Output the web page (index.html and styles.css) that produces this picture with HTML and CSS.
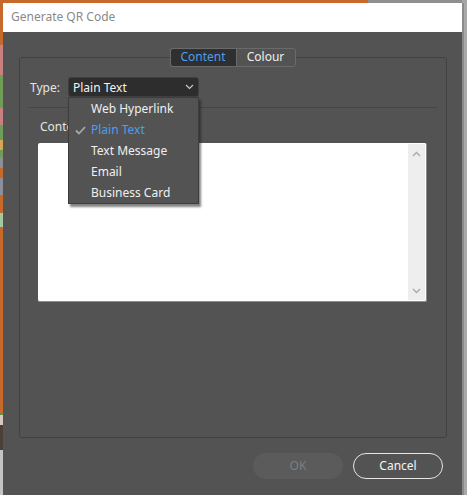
FILE: index.html
```html
<!DOCTYPE html>
<html>
<head>
<meta charset="utf-8">
<link rel="stylesheet" href="styles.css">
</head>
<body>
<div class="topstrip"></div>
<div class="screen">
  <div class="leftstrip"></div>
  <div class="dialog">
    <div class="titlebar">Generate QR Code</div>
    <div class="body">
      <div class="group">
        <div class="tabs">
          <div class="tab active">Content</div>
          <div class="tab">Colour</div>
        </div>
        <div class="typerow">
          <span class="label">Type:</span>
          <div class="selectwrap">
            <div class="select">
              <span>Plain Text</span>
              <svg class="chev" width="9" height="6" viewBox="0 0 9 6"><path d="M1 1 L4.5 4.5 L8 1" fill="none" stroke="#c8c8c8" stroke-width="1.2"/></svg>
            </div>
            <ul class="menu">
              <li>Web Hyperlink</li>
              <li class="checked"><svg class="check" width="11" height="9" viewBox="0 0 11 9"><path d="M1 4.5 L4 7.5 L10 1" fill="none" stroke="#a8a8a8" stroke-width="1.8"/></svg>Plain Text</li>
              <li>Text Message</li>
              <li>Email</li>
              <li>Business Card</li>
            </ul>
          </div>
        </div>
        <div class="sep"></div>
        <div class="contentlabel">Content:</div>
        <div class="textarea">
          <div class="scrollbar">
            <svg width="9" height="6" viewBox="0 0 9 6"><path d="M1 5 L4.5 1.5 L8 5" fill="none" stroke="#a9a9a9" stroke-width="1.4"/></svg>
            <svg width="9" height="6" viewBox="0 0 9 6"><path d="M1 1 L4.5 4.5 L8 1" fill="none" stroke="#a9a9a9" stroke-width="1.4"/></svg>
          </div>
        </div>
      </div>
      <div class="buttons">
        <div class="btn ok">OK</div>
        <div class="btn cancel">Cancel</div>
      </div>
    </div>
  </div>
  <div class="rightstrip"></div>
</div>
</body>
</html>
```
FILE: styles.css
```css
html, body {
  margin: 0;
  padding: 0;
}
body {
  width: 467px;
  height: 495px;
  overflow: hidden;
  background: #9a9a9a;
  font-family: "Noto Sans", "Open Sans", sans-serif;
  font-size: 12px;
}
.topstrip {
  height: 3px;
  background: linear-gradient(to right, #c6692b 0, #c6692b 368px, #8f8f8f 368px, #8f8f8f 462px, #a6a6a6 462px);
}
.screen {
  display: flex;
  height: 492px;
}
.leftstrip {
  width: 3px;
  flex: none;
  background: linear-gradient(to bottom,
    #c6692b 0, #c6692b 42px,
    #c98080 42px, #c98080 72px,
    #6f9d58 72px, #6f9d58 105px,
    #c98080 105px, #c98080 122px,
    #6f9d58 122px, #6f9d58 137px,
    #d4a655 137px, #d4a655 147px,
    #6f9d58 147px, #6f9d58 154px,
    #8c8f99 154px, #8c8f99 165px,
    #c6692b 165px, #c6692b 175px,
    #8c8f99 175px, #8c8f99 192px,
    #c6692b 192px, #c6692b 210px,
    #a3c9a0 210px, #a3c9a0 224px,
    #c6692b 224px, #c6692b 410px,
    #4f9a48 410px, #4f9a48 412px,
    #d8c8c0 412px, #d8c8c0 422px,
    #4a4038 422px, #4a4038 447px,
    #c4c4c4 447px);
}
.rightstrip {
  width: 5px;
  flex: none;
  background: linear-gradient(to right, #8a8a8a 0, #8a8a8a 2px, #a8a8a8 2px);
}
.dialog {
  width: 459px;
  flex: none;
  display: flex;
  flex-direction: column;
}
.titlebar {
  height: 29px;
  background: #ffffff;
  color: #8a8a8a;
  line-height: 28px;
  padding-left: 8px;
  font-size: 12px;
}
.body {
  flex: 1;
  background: #535353;
  padding: 25px 15px 0 16px;
  display: flex;
  flex-direction: column;
}
.group {
  position: relative;
  height: 379px;
  border: 1px solid #414141;
  border-radius: 3px;
}
.tabs {
  display: flex;
  justify-content: center;
  margin-top: -10px;
  margin-left: -1px;
}
.tab {
  height: 17px;
  line-height: 16px;
  border: 1px solid #6a6a6a;
  background: #535353;
  color: #f0f0f0;
  font-size: 12px;
  text-align: center;
  box-sizing: content-box;
}
.tab.active {
  background: #2f2f2f;
  color: #4c9df0;
  border-right: none;
  border-radius: 3px 0 0 3px;
  width: 65px;
}
.tab:last-child {
  border-radius: 0 3px 3px 0;
  width: 58px;
}
.typerow {
  display: flex;
  align-items: center;
  margin-top: 10px;
  padding-left: 10px;
  height: 20px;
}
.label {
  color: #e4e4e4;
  width: 38px;
}
.selectwrap {
  position: relative;
}
.select {
  height: 18px;
  background: #2d2d2d;
  border: 1px solid #3f3f3f;
  border-radius: 3px;
  display: flex;
  align-items: center;
  justify-content: space-between;
  padding: 0 0 0 4px;
  box-sizing: content-box;
  width: 125px;
  color: #f2f2f2;
}
.chev {
  margin-right: 4px;
}
.menu {
  position: absolute;
  left: 0;
  top: 20px;
  margin: 0;
  padding: 0;
  list-style: none;
  width: 129px;
  height: 105px;
  background: #535353;
  border: 1px solid #3d3d3d;
  box-shadow: 2px 3px 2px rgba(30, 30, 30, 0.55);
  z-index: 2;
}
.menu li {
  height: 21px;
  line-height: 21px;
  padding-left: 22px;
  color: #f0f0f0;
  position: relative;
}
.menu li.checked {
  color: #4c9df0;
}
.check {
  position: absolute;
  left: 6px;
  top: 7px;
}
.sep {
  height: 1px;
  background: #464646;
  margin: 10px 9px 0 8px;
}
.contentlabel {
  color: #e4e4e4;
  margin: 10px 0 0 20px;
  height: 17px;
  line-height: 17px;
}
.textarea {
  margin: 8px 0 0 18px;
  width: 388px;
  height: 158px;
  background: #ffffff;
  border-right: 1px solid #8c8c8c;
  border-bottom: 1px solid #8c8c8c;
  border-radius: 2px;
  display: flex;
  justify-content: flex-end;
}
.scrollbar {
  width: 17px;
  margin: 1px 1px 1px 0;
  background: #eeeeee;
  display: flex;
  flex-direction: column;
  justify-content: space-between;
  align-items: center;
  padding: 7px 0 6px;
}
.buttons {
  display: flex;
  justify-content: flex-end;
  gap: 10px;
  margin-top: 15px;
  margin-right: 4px;
}
.btn {
  width: 90px;
  height: 26px;
  line-height: 26px;
  text-align: center;
  border-radius: 13px;
  box-sizing: border-box;
  font-size: 12px;
}
.btn.ok {
  background: #5b5b5b;
  color: #7e7e7e;
}
.btn.cancel {
  border: 1px solid #e6e6e6;
  color: #f4f4f4;
  line-height: 24px;
}
```
